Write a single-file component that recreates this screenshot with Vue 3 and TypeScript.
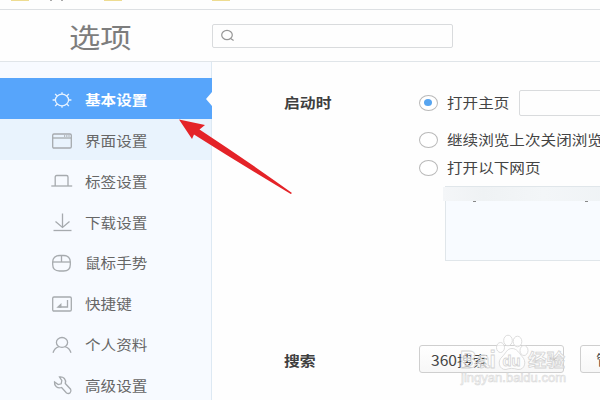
<template>
  <div class="page">
    <div class="bookmarks">
      <i class="folder first"></i>
      <i class="tick t1"></i>
      <i class="tick t2"></i>
      <i class="folder second"></i>
      <i class="folder third"></i>
    </div>
    <header class="header">
      <h1 class="title"><span class="wide">选项</span></h1>
      <div class="search">
        <svg width="14" height="13" viewBox="0 0 14 13">
          <ellipse cx="6" cy="6" rx="5.3" ry="4.7" />
          <path d="M9.6 9.6L12.6 11.6" />
        </svg>
      </div>
    </header>
    <div class="body">
      <nav class="sidebar">
        <div
          v-for="item in menu"
          :key="item.label"
          class="menu-item"
          :class="{ active: item.label === current, hover: item.label === hovered }"
        >
          <svg class="menu-icon" width="22" height="20" viewBox="0 0 22 20">
            <path v-for="d in item.paths" :key="d" :d="d" />
          </svg>
          <span class="wide">{{ item.label }}</span>
        </div>
      </nav>
      <main class="content">
        <section class="section">
          <h2 class="section-title"><span class="wide">启动时</span></h2>
          <div class="options">
            <div v-for="(option, i) in startup" :key="option" class="option">
              <span class="radio" :class="{ checked: i === selected }"></span>
              <span class="option-label"><span class="wide">{{ option }}</span></span>
              <span v-if="i === 0" class="home-input"></span>
            </div>
            <div class="url-list">
              <div class="masked"></div>
              <div class="marks"><i></i><i></i></div>
            </div>
          </div>
        </section>
        <section class="section engine">
          <h2 class="section-title"><span class="wide">搜索</span></h2>
          <div class="select">
            <span class="wide">360搜索</span>
            <svg width="8" height="5" viewBox="0 0 8 5"><path d="M0 0.5H8L4 4.5Z" /></svg>
          </div>
          <div class="manage"><span class="wide">管理搜索引擎</span></div>
        </section>
      </main>
    </div>

    <svg class="overlay" width="600" height="400" viewBox="0 0 600 400">
      <path
        class="arrow"
        d="M179 119.5L205 125L199.5 129.5Q246 160 292 193L290.8 194Q242 165 194 134.5L192 139Z"
      />
      <g class="watermark">
        <ellipse cx="500.5" cy="347.5" rx="4" ry="5" />
        <ellipse cx="508" cy="340.5" rx="4.3" ry="5.3" />
        <ellipse cx="517.5" cy="341.5" rx="4.3" ry="5.3" />
        <ellipse cx="524" cy="350.5" rx="4" ry="5" />
        <path d="M512 348.5C517 348.5 519 353 522 356.5C527 361 525 370 518 369.5C513 368 510 368 506 369.5C499 370 497 361 502 357C506 353 507 348.5 512 348.5Z" />
        <text x="460" y="368" font-size="24" textLength="36" lengthAdjust="spacingAndGlyphs">Bai</text>
        <text x="502.5" y="366" font-size="15" textLength="18" lengthAdjust="spacingAndGlyphs">du</text>
        <text x="528" y="367" font-size="18" textLength="37" lengthAdjust="spacingAndGlyphs">经验</text>
        <text class="site" x="461" y="382" font-size="12" textLength="105" lengthAdjust="spacingAndGlyphs">jingyan.baidu.com</text>
      </g>
    </svg>
  </div>
</template>

<script setup lang="ts">
import { ref } from 'vue'

interface MenuItem {
  label: string
  paths: string[]
}

const current = ref('基本设置')
const hovered = ref('界面设置')
const selected = ref(0)

const menu: MenuItem[] = [
  {
    label: '基本设置',
    paths: [
      'M11 4.2A6.6 5.8 0 1 0 11 15.8A6.6 5.8 0 1 0 11 4.2Z',
      'M11 4.2V2.2M11 15.8V17.8M4.4 10H1.6M17.6 10H20.4M6.3 5.9L4.1 4M15.7 5.9L17.9 4M6.3 14.1L4.1 16M15.7 14.1L17.9 16',
    ],
  },
  {
    label: '界面设置',
    paths: ['M3 3H19Q20.3 3 20.3 4.3V15.7Q20.3 17 19 17H3Q1.7 17 1.7 15.7V4.3Q1.7 3 3 3Z', 'M2 7H20', 'M13 5H14.2M15.2 5H16.4M17.4 5H18.6'],
  },
  {
    label: '标签设置',
    paths: ['M4.2 15V6Q4.2 4.5 5.7 4.5H15.5Q17 4.5 17 6V15', 'M0.3 15H21.2'],
  },
  {
    label: '下载设置',
    paths: ['M11.5 1.5V15', 'M4.5 9.5L11.5 15.5L18.5 9.5', 'M2.5 18.5H20.5'],
  },
  {
    label: '鼠标手势',
    paths: ['M9 2.5H12.5Q19.3 2.5 19.3 9V11.5Q19.3 18 12.5 18H8.5Q1.7 18 1.7 11.5V9Q1.7 2.5 9 2.5Z', 'M1.7 9H19.3', 'M10.5 2.5V9'],
  },
  {
    label: '快捷键',
    paths: ['M3 3H19Q20.3 3 20.3 4.3V15.7Q20.3 17 19 17H3Q1.7 17 1.7 15.7V4.3Q1.7 3 3 3Z', 'M16.5 6V13H7.5', 'M9.8 10.5L7 13H9.8Z'],
  },
  {
    label: '个人资料',
    paths: ['M11 2.5A5.6 4.9 0 1 0 11 12.3A5.6 4.9 0 1 0 11 2.5Z', 'M2 17.8Q3.5 12.8 8 11.6M14 11.6Q18.5 12.8 20 17.8'],
  },
  {
    label: '高级设置',
    paths: ['M8.5 2C12.5 1.5 15.5 4.5 14.3 8.5L19.6 14.2C21 17.2 18.3 19.5 15.5 18L10.6 12.5C6.5 13.8 3 11 3.5 7L7.2 9.6L10.2 8.8L10.8 5.5Z'],
  },
]

const startup = ['打开主页', '继续浏览上次关闭浏览器时的网页', '打开以下网页']
</script>

<style>
body {
  margin: 0;
  background: #fff;
}
</style>

<style scoped>
.page {
  position: relative;
  width: 600px;
  height: 400px;
  overflow: hidden;
  box-sizing: border-box;
  background: #fefefe;
  color: #444;
  font-family: 'Noto Sans CJK SC', sans-serif;
  font-size: 13.8px;
  line-height: 20px;
}

.wide {
  display: inline-block;
  white-space: nowrap;
  transform: scaleX(1.13);
  transform-origin: left center;
}

.bookmarks {
  display: flex;
  box-sizing: border-box;
  height: 10px;
  padding-left: 11px;
  border-bottom: 1px solid #dde0e3;
}

.folder {
  width: 18px;
  height: 1px;
  background: #eedc91;
}

.tick {
  width: 2px;
  height: 1px;
  background: #aaa;
}

.t1 {
  margin-left: 21px;
}

.t2 {
  margin-left: 9px;
}

.second {
  margin-left: 41px;
}

.third {
  margin-left: 90px;
}

.header {
  display: flex;
  align-items: center;
  box-sizing: border-box;
  height: 52px;
  padding-left: 69px;
  border-bottom: 1px solid #e0e5e9;
}

.title {
  width: 143px;
  margin: 0;
  color: #7d7d7d;
  font-size: 27.7px;
  font-weight: 400;
  line-height: 40px;
}

.search {
  display: flex;
  align-items: center;
  box-sizing: border-box;
  width: 241px;
  height: 24px;
  padding-left: 8px;
  border: 1px solid #d9dbdd;
  border-radius: 2px;
}

.search svg {
  fill: none;
  stroke: #969696;
  stroke-width: 1.2;
}

.body {
  display: flex;
  height: 338px;
}

.sidebar {
  flex: none;
  box-sizing: border-box;
  width: 212px;
  padding-top: 16.4px;
  border-right: 1px solid #dde9f3;
  background: #f7faff;
}

.menu-item {
  position: relative;
  display: flex;
  align-items: center;
  gap: 12px;
  box-sizing: border-box;
  width: 212px;
  height: 40.8px;
  padding: 2px 0 0 50.5px;
  color: #666;
}

.menu-item .wide {
  margin-top: -1px;
}

.menu-item.hover {
  width: 211px;
  background: #e9f3fd;
}

.menu-item.hover .wide,
.menu-item.active .wide {
  margin-top: -2px;
}

.menu-item.active {
  background: #57a5fb;
  color: #fff;
  font-weight: 700;
}

.menu-item.active::after {
  content: '';
  position: absolute;
  right: 0;
  top: 14px;
  border: 7px solid transparent;
  border-left: 0;
  border-right: 6px solid #fefefe;
}

.menu-icon {
  flex: none;
  fill: none;
  stroke: #a6aaae;
  stroke-width: 1.3;
}

.active .menu-icon {
  stroke: #e6f2ff;
}

.content {
  flex: 1;
  min-width: 0;
  padding: 28px 0 0 72px;
}

.section {
  display: flex;
}

.section-title {
  flex: none;
  width: 134.5px;
  margin: 0;
  padding-top: 2px;
  color: #3f3f3f;
  font-size: 14px;
  font-weight: 700;
  line-height: 20px;
}

.options {
  width: 300px;
}

.option {
  display: flex;
  align-items: center;
  height: 28px;
}

.option:first-child {
  height: 25px;
  margin-bottom: 11px;
}

.radio {
  flex: none;
  position: relative;
  box-sizing: border-box;
  width: 19px;
  height: 16px;
  border: 1.3px solid #b9b9b9;
  border-radius: 50%;
  background: #fff;
}

.radio.checked::after {
  content: '';
  position: absolute;
  left: 4.5px;
  top: 3.5px;
  width: 8px;
  height: 7px;
  border-radius: 50%;
  background: #57a5f0;
}

.option-label {
  flex: none;
  width: 71.5px;
  margin: -2px 0 0 9.5px;
}

.home-input {
  flex: none;
  box-sizing: border-box;
  width: 200px;
  height: 26px;
  border: 1px solid #d9dbdd;
  border-radius: 2px;
}

.url-list {
  box-sizing: border-box;
  width: 200px;
  height: 75px;
  margin: 4px 0 0 26.5px;
  border: 1px solid #e0e6ea;
  background: #f8fbff;
}

.masked {
  height: 14px;
  margin-left: -3px;
  background: linear-gradient(90deg, #f4f6f8, #eff2f4 20%, #f3f6f8 50%, #edf1f4);
}

.marks {
  display: flex;
  gap: 109px;
  padding-left: 27px;
}

.marks i {
  width: 3px;
  height: 1px;
  background: #888;
}

.engine {
  margin-top: 84px;
}

.engine .section-title {
  padding-top: 5px;
}

.select,
.manage {
  flex: none;
  display: flex;
  align-items: center;
  box-sizing: border-box;
  height: 28px;
  border: 1px solid #cfcfcf;
  border-radius: 3px;
  background: linear-gradient(#fff, #f7f7f7);
}

.select {
  justify-content: space-between;
  width: 145px;
  padding: 1px 6px 0 11px;
}

.select svg {
  fill: #a8a8a8;
}

.manage {
  width: 140px;
  margin-left: 16px;
  padding-left: 15px;
}

.overlay {
  position: absolute;
  left: 0;
  top: 0;
}

.arrow {
  fill: #e42328;
}

.watermark {
  fill: rgba(255, 255, 255, 0.65);
  stroke: #d4d4d4;
  stroke-width: 0.8;
  font-family: 'Liberation Sans', 'Noto Sans CJK SC', sans-serif;
  font-weight: 700;
}

.watermark .site {
  font-weight: 400;
  stroke: #dadada;
  stroke-width: 0.6;
}
</style>
